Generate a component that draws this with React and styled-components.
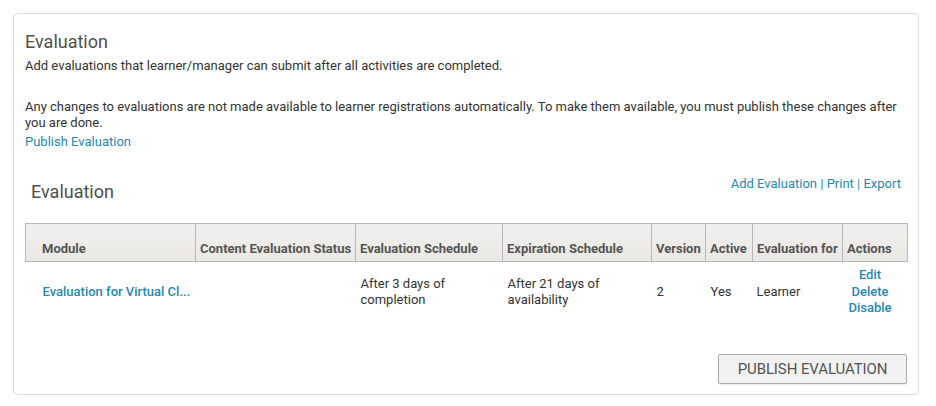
import React from "react";
import styled, { createGlobalStyle } from "styled-components";

const Global = createGlobalStyle`
  html, body { margin: 0; padding: 0; background: #fff; }
  body { font-family: Roboto, "Liberation Sans", Arial, sans-serif; color: #333; }
  * { box-sizing: border-box; }
`;

const Page = styled.div`
  padding: 13px 17px 11px 13px;
`;

const Card = styled.div`
  border: 1px solid #dcdcdc;
  border-radius: 4px;
  padding: 17px 11px 10px 11px;
  background: #fff;
`;

const Title = styled.h2`
  margin: 0;
  font-size: 18px;
  font-weight: 400;
  line-height: 21px;
  color: #4f4f4f;
`;

const Text = styled.p`
  margin: ${(p) => p.$mt || 0}px 0 0 0;
  font-size: 13px;
  line-height: 16px;
  color: #333;
`;

const Link = styled.a`
  color: #2389b5;
  text-decoration: none;
  cursor: pointer;
  font-weight: ${(p) => (p.$bold ? 500 : 400)};
`;

const BlockLink = styled(Link)`
  display: block;
  font-size: 13px;
  line-height: 16px;
  margin-top: 3px;
`;

const SectionHead = styled.div`
  display: flex;
  justify-content: space-between;
  align-items: flex-start;
  margin-top: 26px;
  padding: 0 6px;
  height: 47px;
`;

const SubTitle = styled(Title)`
  margin-top: 5px;
`;

const HeadLinks = styled.div`
  font-size: 13px;
  line-height: 16px;
  color: #2389b5;
`;

const Table = styled.table`
  width: 882px;
  border-collapse: collapse;
  table-layout: fixed;
  font-size: 13px;
`;

const Th = styled.th`
  height: 38px;
  background: linear-gradient(#f1f0ee, #e9e8e4);
  border: 1px solid #b8b8b8;
  vertical-align: bottom;
  text-align: left;
  padding: 0 3px 4px ${(p) => p.$pl || 4}px;
  font-weight: 700;
  font-size: 13px;
  line-height: 16px;
  color: #555;
  white-space: nowrap;
  overflow: hidden;
`;

const Td = styled.td`
  padding: 5px 4px 5px ${(p) => (p.$pl ?? 5)}px;
  vertical-align: middle;
  text-align: left;
  line-height: 16px;
  color: #333;
`;

const Actions = styled.div`
  display: flex;
  flex-direction: column;
  align-items: center;
  padding-right: 6px;
  line-height: 16.5px;
`;

const Footer = styled.div`
  display: flex;
  justify-content: flex-end;
  margin-top: 32px;
`;

const Button = styled.button`
  width: 189px;
  height: 30px;
  background: #f2f2f2;
  border: 1px solid #ababab;
  border-radius: 2px;
  font-family: inherit;
  font-size: 15px;
  letter-spacing: -0.1px;
  color: #555;
  box-shadow: 0 1px 1px rgba(0,0,0,0.08);
`;

const cols = [
  { label: "Module", w: 170, pl: 16 },
  { label: "Content Evaluation Status", w: 160 },
  { label: "Evaluation Schedule", w: 147 },
  { label: "Expiration Schedule", w: 149 },
  { label: "Version", w: 54 },
  { label: "Active", w: 47 },
  { label: "Evaluation for", w: 90 },
  { label: "Actions", w: 65 },
];

export default function App() {
  return (
    <>
      <Global />
      <Page>
        <Card>
          <Title>Evaluation</Title>
          <Text $mt={6}>
            Add evaluations that learner/manager can submit after all activities are completed.
          </Text>
          <Text $mt={25}>
            Any changes to evaluations are not made available to learner registrations automatically. To make them available, you must publish these changes after you are done.
          </Text>
          <BlockLink>Publish Evaluation</BlockLink>

          <SectionHead>
            <SubTitle>Evaluation</SubTitle>
            <HeadLinks>
              <Link>Add Evaluation</Link> | <Link>Print</Link> | <Link>Export</Link>
            </HeadLinks>
          </SectionHead>

          <Table>
            <colgroup>
              {cols.map((c) => (
                <col key={c.label} style={{ width: c.w }} />
              ))}
            </colgroup>
            <thead>
              <tr>
                {cols.map((c) => (
                  <Th key={c.label} $pl={c.pl}>{c.label}</Th>
                ))}
              </tr>
            </thead>
            <tbody>
              <tr>
                <Td $pl={17}><Link $bold>Evaluation for Virtual Cl...</Link></Td>
                <Td></Td>
                <Td>After 3 days of<br />completion</Td>
                <Td>After 21 days of<br />availability</Td>
                <Td $pl={5}>2</Td>
                <Td $pl={5}>Yes</Td>
                <Td $pl={4}>Learner</Td>
                <Td $pl={0}>
                  <Actions>
                    <Link $bold>Edit</Link>
                    <Link $bold>Delete</Link>
                    <Link $bold>Disable</Link>
                  </Actions>
                </Td>
              </tr>
            </tbody>
          </Table>

          <Footer>
            <Button>PUBLISH EVALUATION</Button>
          </Footer>
        </Card>
      </Page>
    </>
  );
}
